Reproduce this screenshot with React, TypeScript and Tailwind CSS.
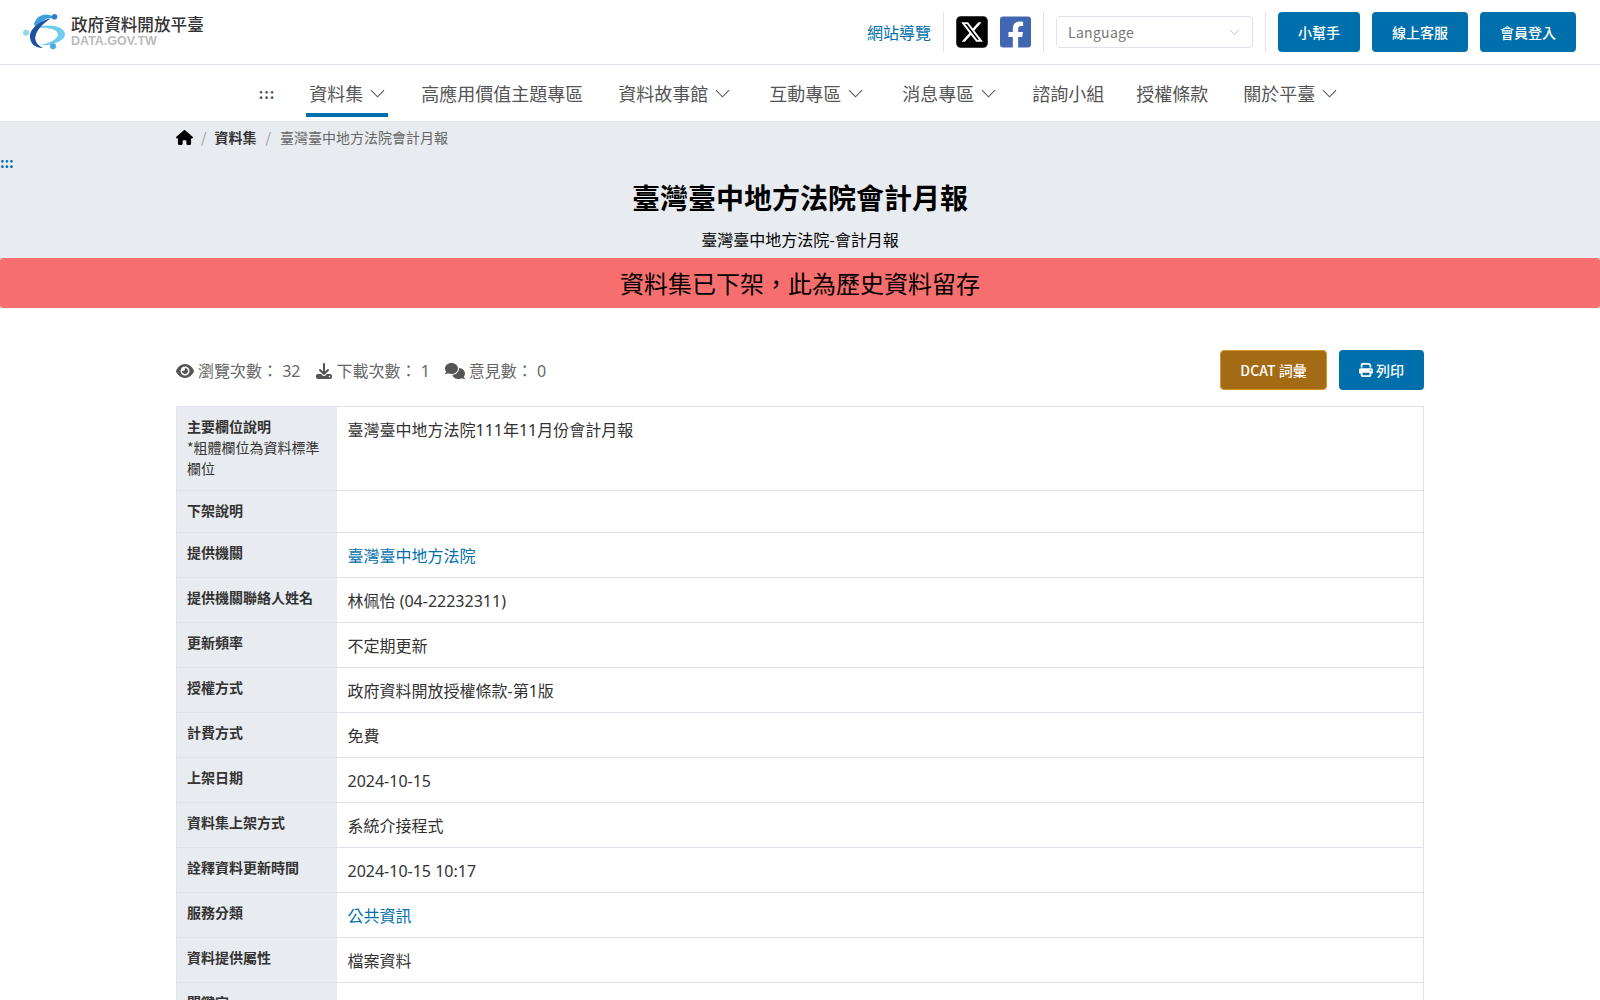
import React from "react";
import { FaFacebookSquare } from "react-icons/fa";
import { FaEye, FaDownload, FaComments, FaPrint, FaHouse, FaSquareXTwitter } from "react-icons/fa6";

const Chevron = ({ className = "" }: { className?: string }) => (
  <svg viewBox="0 0 16 9" className={className} fill="none" stroke="currentColor" strokeWidth="1.1">
    <polyline points="1,1 8,8 15,1" />
  </svg>
);

const Logo = () => (
  <svg viewBox="0 0 50 48" className="w-[50px] h-[48px] shrink-0">
    <path d="M16 20 C28 15 44 18 45 26 C45 33 32 38 20 37 C30 35 38 31 38 26 C37 21 28 19 16 20Z" fill="#6fcbed" />
    <path d="M14 16 C17 6 28 3 36 11 C28 8 21 12 16 21Z" fill="#3f9fdc" />
    <path d="M31 10 C19 13 9 22 10 29 C10.5 36 15 40 23 40 C17 37 14.5 33 15.5 28 C17 21 24 15 31 10Z" fill="#1f4f9e" />
    <circle cx="34.5" cy="8.7" r="2.8" fill="#2f7fc8" />
    <circle cx="6" cy="24.7" r="3" fill="#8fd6f0" />
    <circle cx="33" cy="38.3" r="3" fill="#4aaae0" />
  </svg>
);

const NavItem = ({ label, active, drop, className = "" }: { label: string; active?: boolean; drop?: boolean; className?: string }) => (
  <div className={`h-[52px] pt-[8px] flex items-center gap-[7px] px-[3px] border-b-4 ${active ? "border-[#0070ac]" : "border-transparent"} ${className}`}>
    <span className="text-[18px] text-[#555] leading-none">{label}</span>
    {drop && <Chevron className="w-[15px] h-[9px] text-[#555]" />}
  </div>
);

const rows: { label: React.ReactNode; value?: string; link?: boolean; h: string }[] = [
  {
    label: (
      <>
        <b className="font-bold">主要欄位說明</b>
        <br />
        <span className="font-normal">*粗體欄位為資料標準欄位</span>
      </>
    ),
    value: "臺灣臺中地方法院111年11月份會計月報",
    h: "h-[84px]",
  },
  { label: <b>下架說明</b>, h: "h-[42px]" },
  { label: <b>提供機關</b>, value: "臺灣臺中地方法院", link: true, h: "h-[45px]" },
  { label: <b>提供機關聯絡人姓名</b>, value: "林佩怡 (04-22232311)", h: "h-[45px]" },
  { label: <b>更新頻率</b>, value: "不定期更新", h: "h-[45px]" },
  { label: <b>授權方式</b>, value: "政府資料開放授權條款-第1版", h: "h-[45px]" },
  { label: <b>計費方式</b>, value: "免費", h: "h-[45px]" },
  { label: <b>上架日期</b>, value: "2024-10-15", h: "h-[45px]" },
  { label: <b>資料集上架方式</b>, value: "系統介接程式", h: "h-[45px]" },
  { label: <b>詮釋資料更新時間</b>, value: "2024-10-15 10:17", h: "h-[45px]" },
  { label: <b>服務分類</b>, value: "公共資訊", link: true, h: "h-[45px]" },
  { label: <b>資料提供屬性</b>, value: "檔案資料", h: "h-[45px]" },
  { label: <b>關鍵字</b>, h: "h-[45px]" },
];

export default function App() {
  return (
    <div className="h-screen overflow-hidden bg-white text-[#333] font-['Noto_Sans_CJK_TC','Noto_Sans',sans-serif]">
      <header className="h-[65px] border-b border-[#dfe2ea] flex items-center justify-between pl-[20px] pr-[24px]">
        <div className="flex items-center gap-[1px]">
          <Logo />
          <div className="flex flex-col pb-[2px]">
            <span className="text-[16.6px] leading-[20px] font-medium text-[#333]">政府資料開放平臺</span>
            <span className="text-[12.5px] leading-[14px] font-bold text-[#bbb] font-['Liberation_Sans',sans-serif]">
              DATA.GOV.TW
            </span>
          </div>
        </div>
        <div className="flex items-center h-[40px]">
          <a className="text-[16px] leading-[24px] text-[#0070ac] mr-[12px]">網站導覽</a>
          <div className="w-px h-[40px] bg-[#dfe2ea]" />
          <FaSquareXTwitter className="w-[32px] h-[36px] text-black ml-[12px]" />
          <FaFacebookSquare className="w-[31px] h-[36px] text-[#4267b2] ml-[12px]" />
          <div className="w-px h-[40px] bg-[#dfe2ea] ml-[12px]" />
          <div className="w-[197px] h-[32px] ml-[12px] border border-[#dfe2ea] rounded flex items-center justify-between pl-[11px] pr-[12px]">
            <span className="text-[14px] text-[#777] tracking-[0.3px]">Language</span>
            <Chevron className="w-[11px] h-[6px] text-[#aaa]" />
          </div>
          <div className="w-px h-[40px] bg-[#dfe2ea] ml-[12px]" />
          <div className="flex gap-[12px] ml-[12px]">
            <button className="w-[82px] h-[40px] bg-[#0070ac] rounded text-white text-[14px] font-medium">小幫手</button>
            <button className="w-[96px] h-[40px] bg-[#0070ac] rounded text-white text-[14px] font-medium">線上客服</button>
            <button className="w-[96px] h-[40px] bg-[#0070ac] rounded text-white text-[14px] font-medium">會員登入</button>
          </div>
        </div>
      </header>

      <nav className="h-[56px] border-b border-[#dfe2ea] box-content flex items-start justify-center gap-[30px] pr-[1px]">
        <span className="h-[48px] pt-[8px] flex items-center text-[14px] text-[#555] font-bold leading-none tracking-[1px] mr-[1px]">:::</span>
        <NavItem label="資料集" active drop />
        <NavItem label="高應用價值主題專區" />
        <NavItem label="資料故事館" drop className="ml-[-1px]" />
        <NavItem label="互動專區" drop className="ml-[3px]" />
        <NavItem label="消息專區" drop className="ml-[3px]" />
        <NavItem label="諮詢小組" />
        <NavItem label="授權條款" className="ml-[-4px]" />
        <NavItem label="關於平臺" drop className="ml-[-1px]" />
      </nav>

      <section className="bg-[#e8ebf0] h-[136px]">
        <div className="mx-[176px] h-[30px] flex items-center text-[14px] leading-[20px]">
          <FaHouse className="w-[17px] h-[15px] text-black" />
          <span className="text-[#999] mx-[8px]">/</span>
          <span className="font-bold text-[#333]">資料集</span>
          <span className="text-[#999] mx-[9px]">/</span>
          <span className="text-[#666]">臺灣臺中地方法院會計月報</span>
        </div>
        <div className="h-[20px] text-[14px] text-[#0070ac] font-bold leading-[20px]">:::</div>
        <h1 className="text-[28px] leading-[40px] font-bold text-black text-center mt-[5px]">臺灣臺中地方法院會計月報</h1>
        <p className="text-[16px] leading-[24px] text-black text-center mt-[10px]">臺灣臺中地方法院-會計月報</p>
      </section>
      <div className="h-[50px] bg-[#f76e6e] rounded-[3px] flex items-center justify-center text-[24px] text-black">
        資料集已下架，此為歷史資料留存
      </div>

      <main className="mx-[176px]">
        <div className="flex items-center justify-between mt-[42px] h-[40px]">
          <div className="flex items-center pt-[2px] text-[16px] leading-[24px] text-[#666] font-['Noto_Sans','Noto_Sans_CJK_TC',sans-serif]">
            <FaEye className="w-[18px] h-[16px] text-[#555] mr-[4px]" />
            <span>瀏覽次數： 32</span>
            <FaDownload className="w-[16px] h-[16px] text-[#555] ml-[16px] mr-[4px]" />
            <span>下載次數： 1</span>
            <FaComments className="w-[20px] h-[16px] text-[#555] ml-[15px] mr-[4px]" />
            <span>意見數： 0</span>
          </div>
          <div className="flex gap-[12px]">
            <button className="w-[107px] h-[40px] bg-[#a46a14] border border-[#d8922c] rounded text-white text-[14px] font-medium">DCAT 詞彙</button>
            <button className="w-[85px] h-[40px] bg-[#0070ac] rounded text-white text-[14px] font-medium flex items-center justify-center gap-[3px]">
              <FaPrint className="w-[14px] h-[14px]" />
              列印
            </button>
          </div>
        </div>

        <table className="w-[1248px] mt-[16px] border-collapse table-fixed border border-[#dfe2ea]">
          <tbody>
            {rows.map((r, i) => (
              <tr key={i} className={`${r.h} border-b border-[#dfe2ea]`}>
                <th className="w-[160px] bg-[#e8ebf0] align-top text-left font-normal text-[14px] leading-[21px] text-[#333] px-[10px] pt-[9px]">
                  {r.label}
                </th>
                <td className={`align-top text-[16px] leading-[24px] pl-[11px] pr-[10px] pt-[11px] font-['Noto_Sans','Noto_Sans_CJK_TC',sans-serif] ${r.link ? "text-[#0070ac]" : "text-[#333]"}`}>
                  {r.value}
                </td>
              </tr>
            ))}
          </tbody>
        </table>
      </main>
    </div>
  );
}
